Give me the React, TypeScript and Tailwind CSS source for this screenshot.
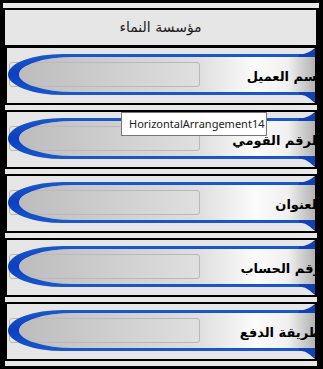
import React from "react";

const labels = ["اسم العميل", "الرقم القومي", "العنوان", "رقم الحساب", "طريقة الدفع"];

const arabic = { fontFamily: '"DejaVu Sans", "Noto Sans", sans-serif' };

function Row({ label, idx }: { label: string; idx: number }) {
  const gid = `g${idx}`;
  const bid = `b${idx}`;
  return (
    <div className="relative ml-[7px] w-[308px] h-[55px] shrink-0 bg-[#e6e6e6] overflow-hidden flex items-center">
      <svg className="absolute inset-0" width="308" height="55" viewBox="0 0 308 55">
        <defs>
          <linearGradient id={gid} gradientUnits="userSpaceOnUse" x1="10" y1="0" x2="308" y2="0">
            <stop offset="0" stopColor="#bcbcbc" />
            <stop offset="0.62" stopColor="#e0e0e0" />
            <stop offset="0.8" stopColor="#fbfbfb" />
            <stop offset="0.91" stopColor="#f0f0f0" />
            <stop offset="1" stopColor="#b2b2b2" />
          </linearGradient>
        </defs>
        <path d="M 67 9 L 308 9 L 308 44 L 67 44 A 55 17.5 0 0 1 67 9 Z" fill={`url(#${gid})`} />
      </svg>
      <input
        type="text"
        className="relative self-start mt-[14px] ml-[2px] w-[191px] h-[25px] rounded-[3px] border border-[#b9b9b9] bg-transparent outline-none"
      />
      <span
        dir="rtl"
        className="relative ml-auto mr-[-6px] mt-[2px] whitespace-nowrap text-[13px] font-bold text-black leading-none"
        style={arabic}
      >
        {label}
      </span>
      <svg className="absolute inset-0 pointer-events-none" width="308" height="55" viewBox="0 0 308 55">
        <defs>
          <linearGradient id={bid} x1="0" y1="0" x2="0" y2="1">
            <stop offset="0" stopColor="#1b58cc" />
            <stop offset="0.5" stopColor="#0c40bc" />
            <stop offset="1" stopColor="#1b58cc" />
          </linearGradient>
        </defs>
        <path
          fillRule="evenodd"
          fill={`url(#${bid})`}
          d="M 56 6 L 308 6 L 308 47 L 56 47 A 55 20.5 0 0 1 56 6 Z M 67 9 L 308 9 L 308 44 L 67 44 A 55 17.5 0 0 1 67 9 Z"
        />
        <path d="M 292 6.5 C 300 6 304 3 308 0 L 308 9 L 292 9 Z" fill="#1042b4" />
        <path d="M 292 46.5 C 300 47 304 52 308 55 L 308 44 L 292 44 Z" fill="#1042b4" />
      </svg>
    </div>
  );
}

export default function App() {
  return (
    <div className="relative w-[323px] h-[369px] bg-black overflow-hidden flex flex-col">
      <div className="mt-[3px] ml-[3px] w-[316px] h-[5px] shrink-0 bg-[#e8e8e8]" />
      <div
        className="mt-[2px] ml-[5px] w-[311px] h-[35px] shrink-0 bg-[#e6e6e6] flex items-center justify-center text-[14px] text-[#1a1a1a]"
        style={arabic}
        dir="rtl"
      >
        مؤسسة النماء
      </div>
      <div className="mt-[3px] flex flex-col gap-[2px]">
        {labels.map((l, i) => (
          <React.Fragment key={i}>
            <Row label={l} idx={i} />
            <div className="ml-[5px] w-[312px] h-[5px] shrink-0 bg-[#e8e8e8]" />
          </React.Fragment>
        ))}
      </div>
      <div
        className="absolute left-[121px] top-[112px] w-[146px] h-[24px] bg-white border border-[#767676] flex items-center pl-[7px] text-[11px] text-[#222] whitespace-nowrap"
        style={{ fontFamily: '"Noto Sans", "Open Sans", sans-serif' }}
      >
        HorizontalArrangement14
      </div>
    </div>
  );
}
